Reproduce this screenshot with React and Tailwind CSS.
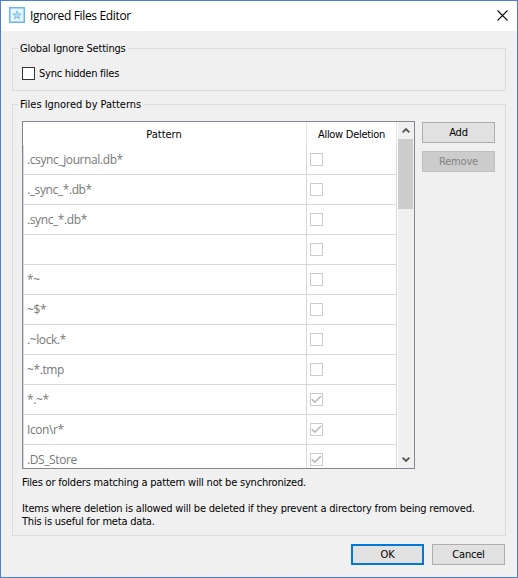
import React from "react";

const rows = [
  [".csync_journal.db*", false],
  ["._sync_*.db*", false],
  [".sync_*.db*", false],
  ["", false],
  ["*~", false],
  ["~$*", false],
  [".~lock.*", false],
  ["~*.tmp", false],
  ["*.~*", true],
  ["Icon\\r*", true],
  [".DS_Store", true],
];

function TitleBar() {
  return (
    <header className="flex h-[30px] shrink-0 items-center bg-white pl-2 pr-[9px]">
      <svg width="16" height="16" viewBox="0 0 16 16" className="mb-[2px] shrink-0">
        <rect x="0" y="0" width="16" height="16" fill="#68b5ee" />
        <rect x="1.5" y="1.5" width="13" height="13" fill="#e9f5fd" />
        <path d="M8 3.8 9.1 6.9H12.2L9.7 8.8 10.6 12 8 10.1 5.4 12 6.3 8.8 3.8 6.9H6.9Z" fill="#b5dcf8" stroke="#68b5ee" strokeWidth="0.8" />
      </svg>
      <h1 className="ml-[5px] font-['Open_Sans',sans-serif] text-[12px] leading-4 tracking-[-0.35px] whitespace-nowrap [font-stretch:normal]">Ignored Files Editor</h1>
      <svg width="11" height="11" viewBox="0 0 11 11" className="mb-[2px] ml-auto" stroke="#111" strokeWidth="1.1">
        <path d="M.5.5 10.5 10.5M10.5.5.5 10.5" />
      </svg>
    </header>
  );
}

function Check({ checked }) {
  return (
    <span className="flex size-[13px] items-center justify-center border border-[#cccccc] bg-white">
      {checked && (
        <svg width="11" height="11" viewBox="0 0 11 11" fill="none" stroke="#b8b8b8" strokeWidth="1.6">
          <path d="M.8 5.2 3.8 8.2 10 2" />
        </svg>
      )}
    </span>
  );
}

function Button({ children, className }) {
  return (
    <button className={"flex h-[21px] w-[73px] items-center justify-center leading-[13px] tracking-[-0.2px] " + className}>{children}</button>
  );
}

function ScrollBar() {
  return (
    <div className="flex w-[17px] flex-col items-center border-x border-l-white border-r-[#f0f0f0] bg-[#f0f0f0]">
      <div className="flex h-[17px] items-center">
        <svg width="8" height="7" viewBox="0 0 8 7" fill="none" stroke="#555" strokeWidth="1.9">
          <path d="M.6 5.4 4 2 7.4 5.4" />
        </svg>
      </div>
      <div className="h-[70px] w-[15px] bg-[#cdcdcd]" />
      <div className="mt-auto flex h-[17px] items-center">
        <svg width="8" height="7" viewBox="0 0 8 7" fill="none" stroke="#555" strokeWidth="1.9">
          <path d="M.6 1.6 4 5 7.4 1.6" />
        </svg>
      </div>
    </div>
  );
}

function PatternTable() {
  return (
    <div className="flex h-[348px] w-[393px] border border-[#828790] bg-white">
      <div className="flex w-[374px] flex-col overflow-hidden">
        <div className="flex h-[23px] shrink-0 items-center leading-[13px]">
          <div className="flex h-full w-[284px] items-center justify-center border-r border-[#e5e5e5] pt-px pr-px">Pattern</div>
          <div className="flex h-full w-[90px] items-center justify-center border-r border-[#e5e5e5] pt-px tracking-[-0.28px]">Allow Deletion</div>
        </div>
        {rows.map(([pattern, checked], i) => (
          <div key={i} className="flex h-[30px] shrink-0 border-l border-[#d8d8d8] text-[#787878]">
            <div className="flex w-[283px] items-center border-r border-b border-[#d8d8d8] pl-[3px] font-['Open_Sans',sans-serif] text-[12px] tracking-[-0.4px] whitespace-pre [font-stretch:normal]">{pattern}</div>
            <div className="flex w-[90px] items-center border-r border-b border-[#d8d8d8] pl-[3px]">
              <Check checked={checked} />
            </div>
          </div>
        ))}
      </div>
      <ScrollBar />
    </div>
  );
}

export default function App() {
  return (
    <main className="flex h-[578px] w-[518px] flex-col overflow-hidden border border-[#4a81d6] bg-[#f0f0f0] font-['DejaVu_Sans_Condensed','DejaVu_Sans',sans-serif] text-[11px] font-normal text-black [font-stretch:condensed]">
      <TitleBar />
      <fieldset className="mx-[11px] mt-[10px] h-[50px] min-w-0 shrink-0 border border-[#dcdcdc] pl-[9px]">
        <legend className="-ml-[4px] h-[15px] px-[2px] leading-[15px] tracking-[-0.2px] whitespace-nowrap">Global Ignore Settings</legend>
        <label className="mt-[11px] flex items-center leading-[13px]">
          <span className="size-[13px] border border-[#333] bg-white" />
          <span className="ml-[4px] tracking-[-0.25px] whitespace-nowrap">Sync hidden files</span>
        </label>
      </fieldset>
      <fieldset className="mx-[11px] mt-[6px] h-[439px] min-w-0 shrink-0 border border-[#dcdcdc] pl-[9px]">
        <legend className="-ml-[4px] h-[15px] px-[2px] leading-[15px] tracking-[-0.02px] whitespace-nowrap">Files Ignored by Patterns</legend>
        <div className="mt-[9px] flex">
          <PatternTable />
          <div className="ml-[7px] flex flex-col gap-2 pt-px">
            <Button className="border border-[#adadad] bg-[#e1e1e1]">Add</Button>
            <Button className="border border-[#bfbfbf] bg-[#cccccc] text-[#838383]">Remove</Button>
          </div>
        </div>
        <p className="mt-[7px] leading-[13px] tracking-[-0.205px] whitespace-nowrap">Files or folders matching a pattern will not be synchronized.</p>
        <p className="mt-[13px] leading-[13px] tracking-[-0.205px] whitespace-nowrap">Items where deletion is allowed will be deleted if they prevent a directory from being removed.</p>
        <p className="leading-[13px] tracking-[-0.205px] whitespace-nowrap">This is useful for meta data.</p>
      </fieldset>
      <footer className="mt-2 flex justify-end gap-2 pr-3">
        <Button className="border-2 border-[#0078d7] bg-[#e1e1e1]">OK</Button>
        <Button className="border border-[#adadad] bg-[#e1e1e1]">Cancel</Button>
      </footer>
    </main>
  );
}
